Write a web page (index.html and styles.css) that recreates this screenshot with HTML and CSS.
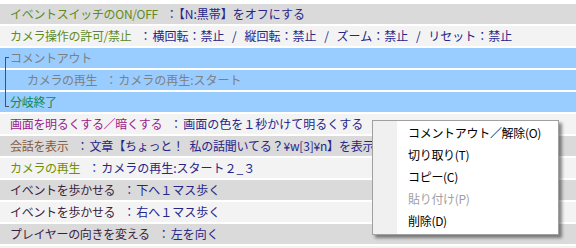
FILE: index.html
```html
<!DOCTYPE html>
<html lang="ja">
<head>
    <meta charset="UTF-8">
    <title>イベントコマンド</title>
    <link rel="stylesheet" href="styles.css">
</head>
<body>
    <div class="list">
        <div class="row dark"><span class="cmd switch">イベントスイッチのON/OFF</span><span class="sep">：</span><span class="val">【N:黒帯】をオフにする</span></div>
        <div class="row light"><span class="cmd switch">カメラ操作の許可/禁止</span><span class="sep">：</span><span class="val wide">横回転：禁止 / 縦回転：禁止 / ズーム：禁止 / リセット：禁止</span></div>

        <div class="group">
            <div class="row sel"><span class="cmd comment">コメントアウト</span></div>
            <div class="row sel indent"><span class="cmd comment">カメラの再生</span><span class="sep comment">：</span><span class="val comment">カメラの再生:スタート</span></div>
            <div class="row sel"><span class="cmd branch">分岐終了</span></div>
        </div>

        <div class="row light"><span class="cmd screen">画面を明るくする／暗くする</span><span class="sep">：</span><span class="val">画面の色を１秒かけて明るくする</span></div>
        <div class="row dark"><span class="cmd talk">会話を表示</span><span class="sep">：</span><span class="val tight">文章【ちょっと！ 私の話聞いてる？¥w[3]¥n】を表示</span></div>
        <div class="row light"><span class="cmd camera">カメラの再生</span><span class="sep">：</span><span class="val">カメラの再生:スタート２_３</span></div>
        <div class="row dark"><span class="cmd walk">イベントを歩かせる</span><span class="sep">：</span><span class="val">下へ１マス歩く</span></div>
        <div class="row light"><span class="cmd walk">イベントを歩かせる</span><span class="sep">：</span><span class="val">右へ１マス歩く</span></div>
        <div class="row dark"><span class="cmd walk">プレイヤーの向きを変える</span><span class="sep">：</span><span class="val">左を向く</span></div>
        <div class="row light last"></div>
    </div>

    <div class="menu">
        <div class="item">コメントアウト／解除(O)</div>
        <div class="item">切り取り(T)</div>
        <div class="item">コピー(C)</div>
        <div class="item disabled">貼り付け(P)</div>
        <div class="item">削除(D)</div>
    </div>
</body>
</html>
```

FILE: styles.css
```css
body {
    margin: 0;
    background: #ffffff;
    font-family: "Noto Sans CJK JP", "Noto Sans", sans-serif;
    font-size: 12px;
    overflow: hidden;
}
.list {
    display: flex;
    flex-direction: column;
    gap: 2px;
    padding-top: 4px;
}
.group {
    position: relative;
    display: flex;
    flex-direction: column;
    gap: 2px;
}
.group::before {
    content: "";
    position: absolute;
    left: 5px;
    top: 9px;
    width: 3px;
    height: 48px;
    border-left: 1px solid #505050;
    border-top: 1px solid #505050;
    border-bottom: 1px solid #505050;
}
.row {
    height: 20px;
    line-height: 20px;
    padding-left: 10px;
    white-space: nowrap;
}
.row.last { height: 2px; }
.dark { background: #dadada; }
.light { background: #f3f3f3; }
.sel { background: #99ccff; }
.indent { padding-left: 27px; }

.cmd { letter-spacing: -0.3px; }
.sep { margin-left: 8px; margin-right: 1px; color: #26268a; }
.val { color: #26268a; word-spacing: 3px; }
.val.wide { word-spacing: 5px; }
.val.tight { letter-spacing: -0.2px; }
.switch { color: #5f8a1e; }
.comment { color: #808080; }
.branch { color: #108a50; }
.screen { color: #9b1a8c; }
.talk { color: #8b5a3c; }
.camera { color: #6f8f00; }
.walk { color: #3a1e40; }

.menu {
    position: absolute;
    left: 372px;
    top: 120px;
    width: 185px;
    padding: 1px 0 2px;
    background: linear-gradient(to right, #f0f0f0 24px, #ffffff 24px);
    border: 1px solid #a0a0a0;
    box-shadow: 3px 3px 3px rgba(0, 0, 0, 0.45);
}
.item {
    height: 22px;
    line-height: 22px;
    padding-left: 35px;
    color: #000000;
    letter-spacing: -0.3px;
}
.item.disabled { color: #a0a0a0; }
```
